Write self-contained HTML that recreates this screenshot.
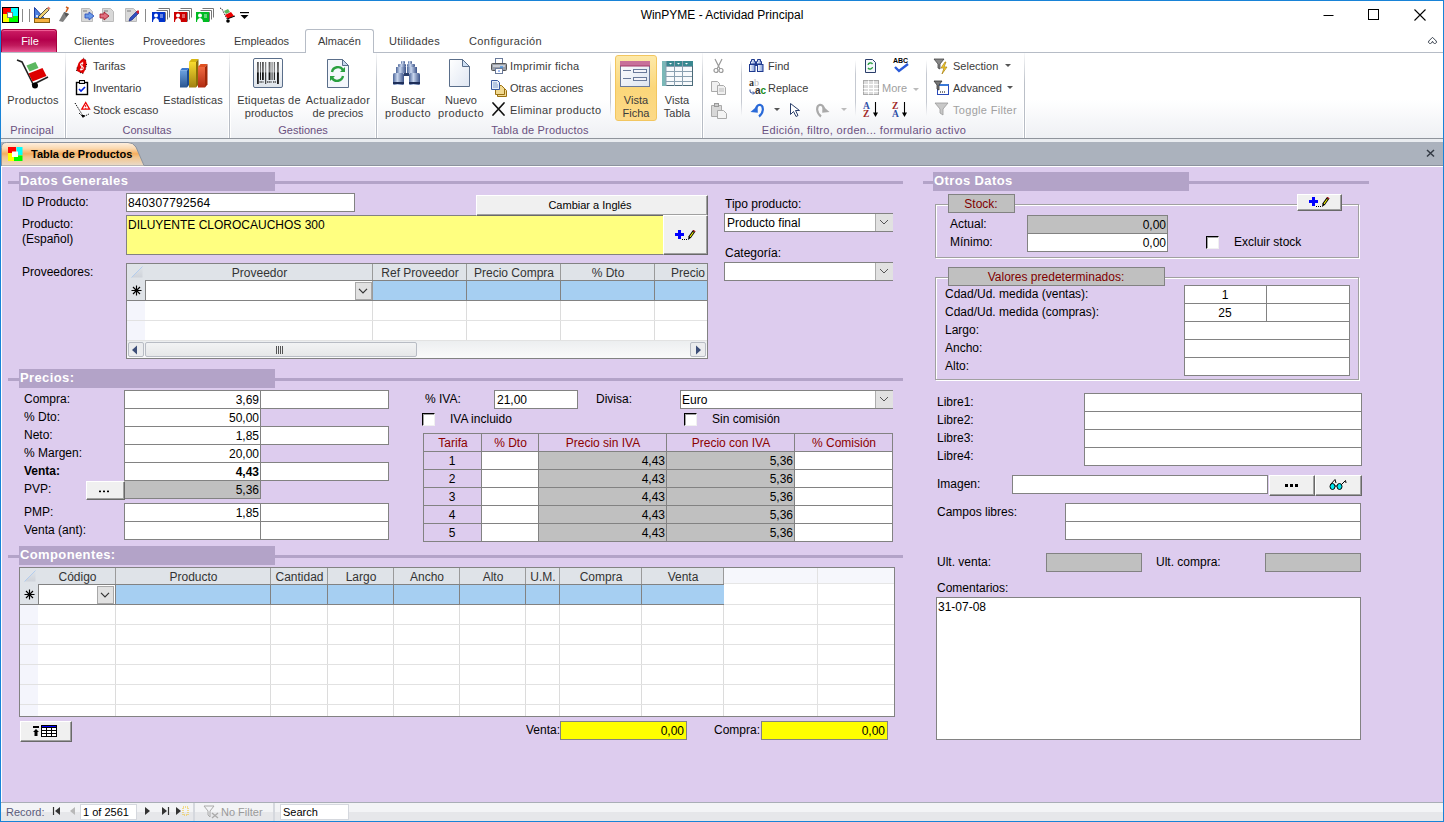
<!DOCTYPE html><html><head><meta charset="utf-8"><style>
*{margin:0;padding:0;box-sizing:border-box}
html,body{width:1444px;height:822px;overflow:hidden;background:#fff;font-family:"Liberation Sans",sans-serif}
div{position:absolute}
.t{white-space:nowrap}
</style></head><body>
<div style="left:0px;top:0px;width:1444px;height:822px;background:#fff"></div>
<div class="t" style="left:522.0px;width:400px;text-align:center;top:9px;font-size:12px;line-height:12px;color:#000;font-weight:normal;">WinPYME - Actividad Principal</div>
<svg style="position:absolute;left:1322px;top:7px" width="16" height="16" viewBox="0 0 16 16"><path d="M1.5 8.5h10" stroke="#000" stroke-width="1"/></svg>
<svg style="position:absolute;left:1366px;top:7px" width="16" height="16" viewBox="0 0 16 16"><rect x="2.5" y="2.5" width="10" height="10" fill="none" stroke="#000"/></svg>
<svg style="position:absolute;left:1412px;top:7px" width="16" height="16" viewBox="0 0 16 16"><path d="M2.5 2.5l11 11M13.5 2.5l-11 11" stroke="#000" stroke-width="1.1"/></svg>
<div style="left:1px;top:29px;width:56px;height:23px;border-radius:3px 3px 0 0;border:1px solid #a8003e;border-bottom:none;background:linear-gradient(#d83a78 0,#c81860 8%,#b4004c 45%,#c01a5c 70%,#e04a88 95%,#f05a96 100%);box-shadow:inset 0 1px 0 rgba(255,120,170,.6)"></div>
<div class="t" style="left:2.0px;width:56px;text-align:center;top:36px;font-size:11px;line-height:11px;color:#fff;font-weight:normal;">File</div>
<div class="t" style="left:74px;top:36px;font-size:11px;line-height:11px;color:#3b3b3b;font-weight:normal;letter-spacing:0.08px;">Clientes</div>
<div class="t" style="left:143px;top:36px;font-size:11px;line-height:11px;color:#3b3b3b;font-weight:normal;letter-spacing:0px;">Proveedores</div>
<div class="t" style="left:234px;top:36px;font-size:11px;line-height:11px;color:#3b3b3b;font-weight:normal;letter-spacing:0px;">Empleados</div>
<div class="t" style="left:389px;top:36px;font-size:11px;line-height:11px;color:#3b3b3b;font-weight:normal;letter-spacing:0.27px;">Utilidades</div>
<div class="t" style="left:469px;top:36px;font-size:11px;line-height:11px;color:#3b3b3b;font-weight:normal;letter-spacing:0.4px;">Configuración</div>
<div style="left:305px;top:29px;width:69px;height:24px;border:1px solid #b6bcc6;border-bottom:none;border-radius:3px 3px 0 0;background:#fff"></div>
<div class="t" style="left:318px;top:36px;font-size:11px;line-height:11px;color:#3b3b3b;font-weight:normal;">Almacén</div>
<svg style="position:absolute;left:1427px;top:36px" width="12" height="9" viewBox="0 0 12 9"><path d="M5.5 1.3L1.8 5Q0.8 6.5 2.3 7.3Q3.5 7.9 4.5 7L5.5 5.3L6.5 7Q7.5 7.9 8.7 7.3Q10.2 6.5 9.2 5Z" fill="none" stroke="#3c4450" stroke-width="1"/></svg>
<div style="left:1px;top:52px;width:1442px;height:87px;border-top:1px solid #b6bcc6;border-bottom:1px solid #8f949c;background:linear-gradient(#fff 0,#fff 55%,#eef0f4 100%)"></div>
<div style="left:306px;top:52px;width:67px;height:1px;background:#fff"></div>
<div style="left:64px;top:53px;width:3px;height:85px;background:linear-gradient(rgba(255,255,255,0),rgba(255,255,255,1) 40%)"></div>
<div style="left:65px;top:53px;width:1px;height:85px;background:linear-gradient(rgba(188,193,201,0.1),#bcc1c9 35%,#b6bbc4)"></div>
<div style="left:228px;top:53px;width:3px;height:85px;background:linear-gradient(rgba(255,255,255,0),rgba(255,255,255,1) 40%)"></div>
<div style="left:229px;top:53px;width:1px;height:85px;background:linear-gradient(rgba(188,193,201,0.1),#bcc1c9 35%,#b6bbc4)"></div>
<div style="left:375px;top:53px;width:3px;height:85px;background:linear-gradient(rgba(255,255,255,0),rgba(255,255,255,1) 40%)"></div>
<div style="left:376px;top:53px;width:1px;height:85px;background:linear-gradient(rgba(188,193,201,0.1),#bcc1c9 35%,#b6bbc4)"></div>
<div style="left:701px;top:53px;width:3px;height:85px;background:linear-gradient(rgba(255,255,255,0),rgba(255,255,255,1) 40%)"></div>
<div style="left:702px;top:53px;width:1px;height:85px;background:linear-gradient(rgba(188,193,201,0.1),#bcc1c9 35%,#b6bbc4)"></div>
<div style="left:1023px;top:53px;width:3px;height:85px;background:linear-gradient(rgba(255,255,255,0),rgba(255,255,255,1) 40%)"></div>
<div style="left:1024px;top:53px;width:1px;height:85px;background:linear-gradient(rgba(188,193,201,0.1),#bcc1c9 35%,#b6bbc4)"></div>
<div class="t" style="left:-3.0px;width:70px;text-align:center;top:125px;font-size:11px;line-height:11px;color:#6a5080;font-weight:normal;letter-spacing:0.16px;">Principal</div>
<div class="t" style="left:97.0px;width:100px;text-align:center;top:125px;font-size:11px;line-height:11px;color:#6a5080;font-weight:normal;">Consultas</div>
<div class="t" style="left:253.0px;width:100px;text-align:center;top:125px;font-size:11px;line-height:11px;color:#6a5080;font-weight:normal;">Gestiones</div>
<div class="t" style="left:440.0px;width:200px;text-align:center;top:125px;font-size:11px;line-height:11px;color:#6a5080;font-weight:normal;letter-spacing:0.18px;">Tabla de Productos</div>
<div class="t" style="left:734.0px;width:260px;text-align:center;top:125px;font-size:11px;line-height:11px;color:#6a5080;font-weight:normal;letter-spacing:0.33px;">Edición, filtro, orden... formulario activo</div>
<div class="t" style="left:-2.0px;width:70px;text-align:center;top:95px;font-size:11px;line-height:11px;color:#3b3b3b;font-weight:normal;letter-spacing:0.2px;">Productos</div>
<div class="t" style="left:93px;top:61px;font-size:11px;line-height:11px;color:#3b3b3b;font-weight:normal;">Tarifas</div>
<div class="t" style="left:93px;top:83px;font-size:11px;line-height:11px;color:#3b3b3b;font-weight:normal;">Inventario</div>
<div class="t" style="left:93px;top:105px;font-size:11px;line-height:11px;color:#3b3b3b;font-weight:normal;">Stock escaso</div>
<div class="t" style="left:153.0px;width:80px;text-align:center;top:95px;font-size:11px;line-height:11px;color:#3b3b3b;font-weight:normal;">Estadísticas</div>
<div class="t" style="left:229.0px;width:80px;text-align:center;top:95px;font-size:11px;line-height:11px;color:#3b3b3b;font-weight:normal;letter-spacing:0.19px;">Etiquetas de</div>
<div class="t" style="left:229.0px;width:80px;text-align:center;top:108px;font-size:11px;line-height:11px;color:#3b3b3b;font-weight:normal;">productos</div>
<div class="t" style="left:298.0px;width:80px;text-align:center;top:95px;font-size:11px;line-height:11px;color:#3b3b3b;font-weight:normal;letter-spacing:0.34px;">Actualizador</div>
<div class="t" style="left:298.0px;width:80px;text-align:center;top:108px;font-size:11px;line-height:11px;color:#3b3b3b;font-weight:normal;">de precios</div>
<div class="t" style="left:378.0px;width:60px;text-align:center;top:95px;font-size:11px;line-height:11px;color:#3b3b3b;font-weight:normal;">Buscar</div>
<div class="t" style="left:378.0px;width:60px;text-align:center;top:108px;font-size:11px;line-height:11px;color:#3b3b3b;font-weight:normal;letter-spacing:0.4px;">producto</div>
<div class="t" style="left:431.0px;width:60px;text-align:center;top:95px;font-size:11px;line-height:11px;color:#3b3b3b;font-weight:normal;">Nuevo</div>
<div class="t" style="left:431.0px;width:60px;text-align:center;top:108px;font-size:11px;line-height:11px;color:#3b3b3b;font-weight:normal;letter-spacing:0.4px;">producto</div>
<div class="t" style="left:510px;top:61px;font-size:11px;line-height:11px;color:#3b3b3b;font-weight:normal;letter-spacing:0.24px;">Imprimir ficha</div>
<div class="t" style="left:510px;top:83px;font-size:11px;line-height:11px;color:#3b3b3b;font-weight:normal;">Otras acciones</div>
<div class="t" style="left:510px;top:105px;font-size:11px;line-height:11px;color:#3b3b3b;font-weight:normal;letter-spacing:0.34px;">Eliminar producto</div>
<div style="left:615px;top:55px;width:42px;height:66px;border:1px solid #f2c660;border-radius:3px;background:linear-gradient(#fde9a8,#fbd77a 50%,#fcd987)"></div>
<div class="t" style="left:606.0px;width:60px;text-align:center;top:95px;font-size:11px;line-height:11px;color:#3b3b3b;font-weight:normal;">Vista</div>
<div class="t" style="left:606.0px;width:60px;text-align:center;top:108px;font-size:11px;line-height:11px;color:#3b3b3b;font-weight:normal;">Ficha</div>
<div class="t" style="left:647.0px;width:60px;text-align:center;top:95px;font-size:11px;line-height:11px;color:#3b3b3b;font-weight:normal;">Vista</div>
<div class="t" style="left:647.0px;width:60px;text-align:center;top:108px;font-size:11px;line-height:11px;color:#3b3b3b;font-weight:normal;">Tabla</div>
<div class="t" style="left:768px;top:61px;font-size:11px;line-height:11px;color:#3b3b3b;font-weight:normal;">Find</div>
<div class="t" style="left:768px;top:83px;font-size:11px;line-height:11px;color:#3b3b3b;font-weight:normal;">Replace</div>
<div class="t" style="left:882px;top:83px;font-size:11px;line-height:11px;color:#a0a0a0;font-weight:normal;">More</div>
<div class="t" style="left:953px;top:61px;font-size:11px;line-height:11px;color:#3b3b3b;font-weight:normal;">Selection</div>
<div class="t" style="left:953px;top:83px;font-size:11px;line-height:11px;color:#3b3b3b;font-weight:normal;">Advanced</div>
<div class="t" style="left:953px;top:105px;font-size:11px;line-height:11px;color:#a0a0a0;font-weight:normal;letter-spacing:0.31px;">Toggle Filter</div>
<div style="left:1px;top:139px;width:1442px;height:3px;background:#e9ecf0"></div>
<div style="left:1px;top:142px;width:1442px;height:24px;background:#abb2bd;border-bottom:1px solid #8c939e"></div>
<svg style="position:absolute;left:1px;top:142px" width="150" height="24" viewBox="0 0 150 24"><defs><linearGradient id="gtab" x1="0" y1="0" x2="0" y2="1"><stop offset="0" stop-color="#fdf0e2"/><stop offset="0.25" stop-color="#fbd9b0"/><stop offset="0.48" stop-color="#f6ae5e"/><stop offset="0.62" stop-color="#f2c48c"/><stop offset="1" stop-color="#e9dccd"/></linearGradient></defs><path d="M0.5 24V5.5Q0.5 0.5 5.5 0.5H127Q132 0.5 135 5L143 23.5L144 24z" fill="url(#gtab)" stroke="#8c939e" stroke-width="1"/></svg>
<svg style="position:absolute;left:8px;top:147px" width="15" height="15" viewBox="0 0 15 15"><rect x="0" y="0" width="8" height="7" fill="#f00"/><rect x="8.5" y="0" width="6" height="8" fill="#0ff"/><rect x="0" y="6" width="6" height="8" fill="#ff0"/><rect x="6" y="8.5" width="8.5" height="5.5" fill="#0f0"/><rect x="4" y="4.5" width="6" height="5.5" fill="#fff"/></svg>
<div class="t" style="left:31px;top:149px;font-size:11px;line-height:11px;color:#000;font-weight:bold;">Tabla de Productos</div>
<svg style="position:absolute;left:1426px;top:149px" width="10" height="9" viewBox="0 0 10 9"><path d="M1 1l7 6.5M8 1L1 7.5" stroke="#333a44" stroke-width="1.5"/></svg>
<div style="left:1px;top:166px;width:1442px;height:636px;background:#ddccee;border-top:1px solid #fff;border-left:1px solid #fff"></div>
<div style="left:8px;top:181px;width:895px;height:3px;background:#b3a3c8"></div>
<div style="left:19px;top:172px;width:256px;height:19px;background:#b3a3c8"></div>
<div class="t" style="left:20px;top:174px;font-size:13px;line-height:13px;color:#fff;font-weight:bold;letter-spacing:0.38px;">Datos Generales</div>
<div style="left:8px;top:378px;width:895px;height:3px;background:#b3a3c8"></div>
<div style="left:19px;top:369px;width:256px;height:19px;background:#b3a3c8"></div>
<div class="t" style="left:20px;top:371px;font-size:13px;line-height:13px;color:#fff;font-weight:bold;letter-spacing:0.38px;">Precios:</div>
<div style="left:8px;top:555px;width:895px;height:3px;background:#b3a3c8"></div>
<div style="left:19px;top:546px;width:256px;height:19px;background:#b3a3c8"></div>
<div class="t" style="left:20px;top:548px;font-size:13px;line-height:13px;color:#fff;font-weight:bold;letter-spacing:0.38px;">Componentes:</div>
<div style="left:923px;top:181px;width:446px;height:3px;background:#b3a3c8"></div>
<div style="left:933px;top:172px;width:256px;height:19px;background:#b3a3c8"></div>
<div class="t" style="left:934px;top:174px;font-size:13px;line-height:13px;color:#fff;font-weight:bold;letter-spacing:0.38px;">Otros Datos</div>
<div class="t" style="left:22px;top:196px;font-size:12px;line-height:12px;color:#000;font-weight:normal;">ID Producto:</div>
<div style="left:126px;top:193px;width:229px;height:19px;background:#fff;border:1px solid #828282;"></div>
<div class="t" style="left:128px;top:197px;font-size:12px;line-height:12px;color:#000;font-weight:normal;letter-spacing:0.2px;">840307792564</div>
<div class="t" style="left:22px;top:218px;font-size:12px;line-height:12px;color:#000;font-weight:normal;">Producto:</div>
<div class="t" style="left:22px;top:233px;font-size:12px;line-height:12px;color:#000;font-weight:normal;">(Español)</div>
<div style="left:126px;top:215px;width:582px;height:40px;background:#ffff80;border:1px solid #828282;"></div>
<div class="t" style="left:128px;top:219px;font-size:12px;line-height:12px;color:#000;font-weight:normal;">DILUYENTE CLOROCAUCHOS 300</div>
<div style="left:476px;top:195px;width:232px;height:21px;background:#f0f0f0;border-top:1px solid #fff;border-left:1px solid #fff;border-right:1px solid #696969;border-bottom:1px solid #696969;box-shadow:inset -1px -1px 0 #a0a0a0"></div>
<div style="left:663px;top:215px;width:45px;height:40px;background:#f0f0f0;border-top:1px solid #fff;border-left:1px solid #fff;border-right:1px solid #696969;border-bottom:1px solid #696969;box-shadow:inset -1px -1px 0 #a0a0a0"></div>
<svg style="position:absolute;left:675px;top:230px" width="22" height="11" viewBox="0 0 22 11"><g shape-rendering="crispEdges"><rect x="0" y="3" width="9" height="3" fill="#0000ff"/><rect x="3" y="0" width="3" height="9" fill="#0000ff"/><rect x="7" y="9" width="1" height="1" fill="#000"/><rect x="9" y="9" width="1" height="1" fill="#000"/><rect x="11" y="9" width="1" height="1" fill="#000"/></g><path d="M13 10L13.6 6.2L17.6 0.6L20 2.2L16 7.8z" fill="#000"/><path d="M14.6 6.6L17.9 2L18.7 2.6L15.4 7.2z" fill="#ffff00"/><path d="M17.6 0.6L18.3 -0.2L20.6 1.3L20 2.2z" fill="#900"/></svg>
<div class="t" style="left:490.0px;width:200px;text-align:center;top:200px;font-size:11px;line-height:11px;color:#000;font-weight:normal;">Cambiar a Inglés</div>
<div class="t" style="left:22px;top:266px;font-size:12px;line-height:12px;color:#000;font-weight:normal;">Proveedores:</div>
<div style="left:126px;top:263px;width:582px;height:96px;background:#fff;border:1px solid #828282"></div>
<div style="left:127px;top:264px;width:580px;height:16px;background:#dfe3e8"></div>
<div style="left:127px;top:300px;width:18px;height:41px;background:#f4f5fc"></div>
<div style="left:127px;top:280px;width:18px;height:20px;background:#dfe3e8"></div>
<svg style="position:absolute;left:131px;top:266px" width="12" height="12" viewBox="0 0 12 12"><defs><linearGradient id="gsc" x1="0" y1="0" x2="0" y2="1"><stop offset="0" stop-color="#dfe3e8"/><stop offset="1" stop-color="#cfd3da"/></linearGradient></defs><path d="M0.5 11.5L11.5 0.5V11.5z" fill="url(#gsc)"/><path d="M0.5 11.5L11.5 0.5" stroke="#a8c8f0" stroke-width="0.8"/></svg>
<div style="left:372px;top:300px;width:1px;height:41px;background:#dcdcdc"></div>
<div style="left:372px;top:264px;width:1px;height:36px;background:#9a9a9a"></div>
<div class="t" style="left:199.5px;width:120px;text-align:center;top:267px;font-size:12px;line-height:12px;color:#333;font-weight:normal;">Proveedor</div>
<div style="left:466px;top:300px;width:1px;height:41px;background:#dcdcdc"></div>
<div style="left:466px;top:264px;width:1px;height:36px;background:#9a9a9a"></div>
<div class="t" style="left:360.0px;width:120px;text-align:center;top:267px;font-size:12px;line-height:12px;color:#333;font-weight:normal;">Ref Proveedor</div>
<div style="left:560px;top:300px;width:1px;height:41px;background:#dcdcdc"></div>
<div style="left:560px;top:264px;width:1px;height:36px;background:#9a9a9a"></div>
<div class="t" style="left:454.0px;width:120px;text-align:center;top:267px;font-size:12px;line-height:12px;color:#333;font-weight:normal;">Precio Compra</div>
<div style="left:654px;top:300px;width:1px;height:41px;background:#dcdcdc"></div>
<div style="left:654px;top:264px;width:1px;height:36px;background:#9a9a9a"></div>
<div class="t" style="left:548.0px;width:120px;text-align:center;top:267px;font-size:12px;line-height:12px;color:#333;font-weight:normal;">% Dto</div>
<div class="t" style="left:625px;width:80px;text-align:right;top:267px;font-size:12px;line-height:12px;color:#333;font-weight:normal;">Precio</div>
<div style="left:145px;top:280px;width:562px;height:1px;background:#828282"></div>
<div style="left:373px;top:281px;width:334px;height:19px;background:#a6cff2"></div>
<div style="left:466px;top:281px;width:1px;height:19px;background:#828282"></div>
<div style="left:560px;top:281px;width:1px;height:19px;background:#828282"></div>
<div style="left:654px;top:281px;width:1px;height:19px;background:#828282"></div>
<div style="left:145px;top:281px;width:1px;height:19px;background:#828282"></div>
<div style="left:355px;top:282px;width:17px;height:18px;background:#e1e1e1;border:1px solid #a8a8a8"></div>
<svg style="position:absolute;left:358px;top:288px" width="10" height="6" viewBox="0 0 10 6"><path d="M1 0.8l4 4 4-4" fill="none" stroke="#333" stroke-width="1.2"/></svg>
<div style="left:127px;top:300px;width:580px;height:1px;background:#828282"></div>
<div style="left:127px;top:320px;width:580px;height:1px;background:#e2e2e2"></div>
<div style="left:127px;top:340px;width:580px;height:1px;background:#e2e2e2"></div>
<svg style="position:absolute;left:131px;top:285px" width="11" height="11" viewBox="0 0 11 11"><path d="M5.5 0.5v10M0.5 5.5h10M2 2l7 7M9 2l-7 7" stroke="#000" stroke-width="1.15"/></svg>
<div style="left:127px;top:341px;width:580px;height:17px;background:linear-gradient(#eceef0,#fafafa)"></div>
<div style="left:128px;top:342px;width:16px;height:15px;background:#ebecee;border:1px solid #b8bcc4;border-radius:2px"></div>
<div style="left:145px;top:342px;width:272px;height:15px;background:linear-gradient(#f2f3f4,#e6e7e8);border:1px solid #b8bcc4;border-radius:2px"></div>
<div style="left:690px;top:342px;width:16px;height:15px;background:#ebecee;border:1px solid #b8bcc4;border-radius:2px"></div>
<svg style="position:absolute;left:131px;top:345px" width="8" height="10" viewBox="0 0 8 10"><path d="M6 0.5L1 5l5 4.5z" fill="#3d4e78"/></svg>
<svg style="position:absolute;left:695px;top:345px" width="8" height="10" viewBox="0 0 8 10"><path d="M1 0.5L6 5l-5 4.5z" fill="#3d4e78"/></svg>
<svg style="position:absolute;left:276px;top:346px" width="8" height="8" viewBox="0 0 8 8"><path d="M0.5 0v8M2.5 0v8M4.5 0v8M6.5 0v8" stroke="#555" stroke-width="1"/></svg>
<div class="t" style="left:725px;top:198px;font-size:12px;line-height:12px;color:#000;font-weight:normal;">Tipo producto:</div>
<div style="left:724px;top:213px;width:169px;height:19px;background:#fff;border:1px solid #828282;"></div>
<div class="t" style="left:727px;top:217px;font-size:12px;line-height:12px;color:#000;font-weight:normal;">Producto final</div>
<div style="left:875px;top:214px;width:18px;height:17px;background:#e1e1e1;border-left:1px solid #adadad"></div>
<svg style="position:absolute;left:879px;top:219px" width="10" height="6" viewBox="0 0 10 6"><path d="M1 1l4 4 4-4" fill="none" stroke="#555" stroke-width="1"/></svg>
<div class="t" style="left:725px;top:247px;font-size:12px;line-height:12px;color:#000;font-weight:normal;">Categoría:</div>
<div style="left:724px;top:262px;width:169px;height:19px;background:#fff;border:1px solid #828282;"></div>
<div style="left:875px;top:263px;width:18px;height:17px;background:#e1e1e1;border-left:1px solid #adadad"></div>
<svg style="position:absolute;left:879px;top:268px" width="10" height="6" viewBox="0 0 10 6"><path d="M1 1l4 4 4-4" fill="none" stroke="#555" stroke-width="1"/></svg>
<div style="left:935px;top:204px;width:424px;height:54px;border:1px solid #a0a0a0;box-shadow:1px 1px 0 #fff, inset 1px 1px 0 #fff"></div>
<div style="left:948px;top:194px;width:67px;height:19px;background:#c0c0c0;border:1px solid #828282"></div>
<div class="t" style="left:947.5px;width:67px;text-align:center;top:198px;font-size:12px;line-height:12px;color:#800000;font-weight:normal;">Stock:</div>
<div style="left:1297px;top:194px;width:45px;height:17px;background:#f0f0f0;border-top:1px solid #fff;border-left:1px solid #fff;border-right:1px solid #696969;border-bottom:1px solid #696969;box-shadow:inset -1px -1px 0 #a0a0a0"></div>
<svg style="position:absolute;left:1309px;top:197px" width="22" height="11" viewBox="0 0 22 11"><g shape-rendering="crispEdges"><rect x="0" y="3" width="9" height="3" fill="#0000ff"/><rect x="3" y="0" width="3" height="9" fill="#0000ff"/><rect x="7" y="9" width="1" height="1" fill="#000"/><rect x="9" y="9" width="1" height="1" fill="#000"/><rect x="11" y="9" width="1" height="1" fill="#000"/></g><path d="M13 10L13.6 6.2L17.6 0.6L20 2.2L16 7.8z" fill="#000"/><path d="M14.6 6.6L17.9 2L18.7 2.6L15.4 7.2z" fill="#ffff00"/><path d="M17.6 0.6L18.3 -0.2L20.6 1.3L20 2.2z" fill="#900"/></svg>
<div class="t" style="left:950px;top:218px;font-size:12px;line-height:12px;color:#000;font-weight:normal;">Actual:</div>
<div style="left:1027px;top:215px;width:141px;height:19px;background:#c0c0c0;border:1px solid #828282;"></div>
<div class="t" style="left:1066px;width:100px;text-align:right;top:219px;font-size:12px;line-height:12px;color:#000;font-weight:normal;">0,00</div>
<div class="t" style="left:950px;top:236px;font-size:12px;line-height:12px;color:#000;font-weight:normal;">Mínimo:</div>
<div style="left:1027px;top:233px;width:141px;height:19px;background:#fff;border:1px solid #828282;"></div>
<div class="t" style="left:1066px;width:100px;text-align:right;top:237px;font-size:12px;line-height:12px;color:#000;font-weight:normal;">0,00</div>
<div style="left:1206px;top:236px;width:13px;height:13px;background:#fff;border-top:1px solid #000;border-left:1px solid #000;border-right:1px solid #f0f0f0;border-bottom:1px solid #f0f0f0;box-shadow:inset 1px 1px 0 #a0a0a0"></div>
<div class="t" style="left:1234px;top:236px;font-size:12px;line-height:12px;color:#000;font-weight:normal;">Excluir stock</div>
<div style="left:935px;top:277px;width:424px;height:103px;border:1px solid #a0a0a0;box-shadow:1px 1px 0 #fff, inset 1px 1px 0 #fff"></div>
<div style="left:948px;top:267px;width:217px;height:19px;background:#c0c0c0;border:1px solid #828282"></div>
<div class="t" style="left:947.5px;width:217px;text-align:center;top:271px;font-size:12px;line-height:12px;color:#800000;font-weight:normal;">Valores predeterminados:</div>
<div class="t" style="left:945px;top:288px;font-size:12px;line-height:12px;color:#000;font-weight:normal;">Cdad/Ud. medida (ventas):</div>
<div style="left:1184px;top:285px;width:166px;height:19px;background:#fff;border:1px solid #828282;"></div>
<div class="t" style="left:945px;top:306px;font-size:12px;line-height:12px;color:#000;font-weight:normal;">Cdad/Ud. medida (compras):</div>
<div style="left:1184px;top:303px;width:166px;height:19px;background:#fff;border:1px solid #828282;"></div>
<div class="t" style="left:945px;top:324px;font-size:12px;line-height:12px;color:#000;font-weight:normal;">Largo:</div>
<div style="left:1184px;top:321px;width:166px;height:19px;background:#fff;border:1px solid #828282;"></div>
<div class="t" style="left:945px;top:342px;font-size:12px;line-height:12px;color:#000;font-weight:normal;">Ancho:</div>
<div style="left:1184px;top:339px;width:166px;height:19px;background:#fff;border:1px solid #828282;"></div>
<div class="t" style="left:945px;top:360px;font-size:12px;line-height:12px;color:#000;font-weight:normal;">Alto:</div>
<div style="left:1184px;top:357px;width:166px;height:19px;background:#fff;border:1px solid #828282;"></div>
<div style="left:1266px;top:286px;width:1px;height:18px;background:#828282"></div>
<div class="t" style="left:1185.0px;width:80px;text-align:center;top:289px;font-size:12px;line-height:12px;color:#000;font-weight:normal;">1</div>
<div style="left:1266px;top:304px;width:1px;height:18px;background:#828282"></div>
<div class="t" style="left:1185.0px;width:80px;text-align:center;top:307px;font-size:12px;line-height:12px;color:#000;font-weight:normal;">25</div>
<div class="t" style="left:937px;top:396px;font-size:12px;line-height:12px;color:#000;font-weight:normal;">Libre1:</div>
<div style="left:1084px;top:393px;width:278px;height:19px;background:#fff;border:1px solid #828282;"></div>
<div class="t" style="left:937px;top:414px;font-size:12px;line-height:12px;color:#000;font-weight:normal;">Libre2:</div>
<div style="left:1084px;top:411px;width:278px;height:19px;background:#fff;border:1px solid #828282;"></div>
<div class="t" style="left:937px;top:432px;font-size:12px;line-height:12px;color:#000;font-weight:normal;">Libre3:</div>
<div style="left:1084px;top:429px;width:278px;height:19px;background:#fff;border:1px solid #828282;"></div>
<div class="t" style="left:937px;top:450px;font-size:12px;line-height:12px;color:#000;font-weight:normal;">Libre4:</div>
<div style="left:1084px;top:447px;width:278px;height:19px;background:#fff;border:1px solid #828282;"></div>
<div class="t" style="left:937px;top:478px;font-size:12px;line-height:12px;color:#000;font-weight:normal;">Imagen:</div>
<div style="left:1012px;top:475px;width:256px;height:19px;background:#fff;border:1px solid #828282;"></div>
<div style="left:1269px;top:475px;width:46px;height:21px;background:#f0f0f0;border-top:1px solid #fff;border-left:1px solid #fff;border-right:1px solid #696969;border-bottom:1px solid #696969;box-shadow:inset -1px -1px 0 #a0a0a0"></div>
<svg style="position:absolute;left:1285px;top:484px" width="14" height="4" viewBox="0 0 14 4"><rect x="0" y="0" width="3" height="3" fill="#000"/><rect x="5" y="0" width="3" height="3" fill="#000"/><rect x="10" y="0" width="3" height="3" fill="#000"/></svg>
<div style="left:1315px;top:475px;width:47px;height:21px;background:#f0f0f0;border-top:1px solid #fff;border-left:1px solid #fff;border-right:1px solid #696969;border-bottom:1px solid #696969;box-shadow:inset -1px -1px 0 #a0a0a0"></div>
<svg style="position:absolute;left:1329px;top:478px" width="18" height="13" viewBox="0 0 18 13"><ellipse cx="3.5" cy="8.5" rx="2.5" ry="3" fill="#00e8f0" stroke="#000" stroke-width="1"/><ellipse cx="10.5" cy="8.5" rx="2.5" ry="3" fill="#00e8f0" stroke="#000" stroke-width="1"/><path d="M6 8h2M1.5 6.5L6 1.5 7 5M12.5 6.5L16.5 2.5 17 5" fill="none" stroke="#000" stroke-width="1"/></svg>
<div class="t" style="left:937px;top:506px;font-size:12px;line-height:12px;color:#000;font-weight:normal;">Campos libres:</div>
<div style="left:1065px;top:503px;width:296px;height:19px;background:#fff;border:1px solid #828282;"></div>
<div style="left:1065px;top:521px;width:296px;height:19px;background:#fff;border:1px solid #828282;"></div>
<div class="t" style="left:937px;top:556px;font-size:12px;line-height:12px;color:#000;font-weight:normal;">Ult. venta:</div>
<div style="left:1046px;top:553px;width:96px;height:19px;background:#c0c0c0;border:1px solid #828282;"></div>
<div class="t" style="left:1156px;top:556px;font-size:12px;line-height:12px;color:#000;font-weight:normal;">Ult. compra:</div>
<div style="left:1265px;top:553px;width:96px;height:19px;background:#c0c0c0;border:1px solid #828282;"></div>
<div class="t" style="left:937px;top:582px;font-size:12px;line-height:12px;color:#000;font-weight:normal;">Comentarios:</div>
<div style="left:936px;top:597px;width:425px;height:143px;background:#fff;border:1px solid #828282;"></div>
<div class="t" style="left:938px;top:601px;font-size:12px;line-height:12px;color:#000;font-weight:normal;">31-07-08</div>
<div class="t" style="left:24px;top:393px;font-size:12px;line-height:12px;color:#000;font-weight:normal;">Compra:</div>
<div class="t" style="left:24px;top:411px;font-size:12px;line-height:12px;color:#000;font-weight:normal;">% Dto:</div>
<div class="t" style="left:24px;top:429px;font-size:12px;line-height:12px;color:#000;font-weight:normal;">Neto:</div>
<div class="t" style="left:24px;top:447px;font-size:12px;line-height:12px;color:#000;font-weight:normal;">% Margen:</div>
<div class="t" style="left:24px;top:465px;font-size:12px;line-height:12px;color:#000;font-weight:bold;">Venta:</div>
<div class="t" style="left:24px;top:483px;font-size:12px;line-height:12px;color:#000;font-weight:normal;">PVP:</div>
<div class="t" style="left:24px;top:506px;font-size:12px;line-height:12px;color:#000;font-weight:normal;">PMP:</div>
<div class="t" style="left:24px;top:524px;font-size:12px;line-height:12px;color:#000;font-weight:normal;">Venta (ant):</div>
<div style="left:124px;top:390px;width:137px;height:19px;background:#fff;border:1px solid #828282;"></div>
<div style="left:260px;top:390px;width:129px;height:19px;background:#fff;border:1px solid #828282;"></div>
<div class="t" style="left:159px;width:100px;text-align:right;top:394px;font-size:12px;line-height:12px;color:#000;font-weight:normal;">3,69</div>
<div style="left:124px;top:408px;width:137px;height:19px;background:#fff;border:1px solid #828282;"></div>
<div class="t" style="left:159px;width:100px;text-align:right;top:412px;font-size:12px;line-height:12px;color:#000;font-weight:normal;">50,00</div>
<div style="left:124px;top:426px;width:137px;height:19px;background:#fff;border:1px solid #828282;"></div>
<div style="left:260px;top:426px;width:129px;height:19px;background:#fff;border:1px solid #828282;"></div>
<div class="t" style="left:159px;width:100px;text-align:right;top:430px;font-size:12px;line-height:12px;color:#000;font-weight:normal;">1,85</div>
<div style="left:124px;top:444px;width:137px;height:19px;background:#fff;border:1px solid #828282;"></div>
<div class="t" style="left:159px;width:100px;text-align:right;top:448px;font-size:12px;line-height:12px;color:#000;font-weight:normal;">20,00</div>
<div style="left:124px;top:462px;width:137px;height:19px;background:#fff;border:1px solid #828282;"></div>
<div style="left:260px;top:462px;width:129px;height:19px;background:#fff;border:1px solid #828282;"></div>
<div class="t" style="left:159px;width:100px;text-align:right;top:466px;font-size:12px;line-height:12px;color:#000;font-weight:bold;">4,43</div>
<div style="left:124px;top:480px;width:137px;height:19px;background:#c0c0c0;border:1px solid #828282;"></div>
<div class="t" style="left:159px;width:100px;text-align:right;top:484px;font-size:12px;line-height:12px;color:#000;font-weight:normal;">5,36</div>
<div style="left:124px;top:503px;width:137px;height:19px;background:#fff;border:1px solid #828282;"></div>
<div style="left:260px;top:503px;width:129px;height:19px;background:#fff;border:1px solid #828282;"></div>
<div class="t" style="left:159px;width:100px;text-align:right;top:507px;font-size:12px;line-height:12px;color:#000;font-weight:normal;">1,85</div>
<div style="left:124px;top:521px;width:137px;height:19px;background:#fff;border:1px solid #828282;"></div>
<div style="left:260px;top:521px;width:129px;height:19px;background:#fff;border:1px solid #828282;"></div>
<div style="left:86px;top:481px;width:39px;height:19px;background:#f0f0f0;border-top:1px solid #fff;border-left:1px solid #fff;border-right:1px solid #696969;border-bottom:1px solid #696969;box-shadow:inset -1px -1px 0 #a0a0a0"></div>
<svg style="position:absolute;left:99px;top:490px" width="11" height="3" viewBox="0 0 11 3"><rect x="0" y="0.6" width="2" height="1.6" fill="#000"/><rect x="4" y="0.6" width="2" height="1.6" fill="#000"/><rect x="8" y="0.6" width="2" height="1.6" fill="#000"/></svg>
<div class="t" style="left:425px;top:393px;font-size:12px;line-height:12px;color:#000;font-weight:normal;">% IVA:</div>
<div style="left:494px;top:390px;width:84px;height:19px;background:#fff;border:1px solid #828282;"></div>
<div class="t" style="left:497px;top:394px;font-size:12px;line-height:12px;color:#000;font-weight:normal;">21,00</div>
<div class="t" style="left:596px;top:393px;font-size:12px;line-height:12px;color:#000;font-weight:normal;">Divisa:</div>
<div style="left:680px;top:390px;width:213px;height:19px;background:#fff;border:1px solid #828282;"></div>
<div class="t" style="left:682px;top:394px;font-size:12px;line-height:12px;color:#000;font-weight:normal;">Euro</div>
<div style="left:875px;top:391px;width:18px;height:17px;background:#e1e1e1;border-left:1px solid #adadad"></div>
<svg style="position:absolute;left:879px;top:396px" width="10" height="6" viewBox="0 0 10 6"><path d="M1 1l4 4 4-4" fill="none" stroke="#555" stroke-width="1"/></svg>
<div style="left:422px;top:413px;width:13px;height:13px;background:#fff;border-top:1px solid #000;border-left:1px solid #000;border-right:1px solid #f0f0f0;border-bottom:1px solid #f0f0f0;box-shadow:inset 1px 1px 0 #a0a0a0"></div>
<div class="t" style="left:450px;top:413px;font-size:12px;line-height:12px;color:#000;font-weight:normal;">IVA incluido</div>
<div style="left:684px;top:413px;width:13px;height:13px;background:#fff;border-top:1px solid #000;border-left:1px solid #000;border-right:1px solid #f0f0f0;border-bottom:1px solid #f0f0f0;box-shadow:inset 1px 1px 0 #a0a0a0"></div>
<div class="t" style="left:712px;top:413px;font-size:12px;line-height:12px;color:#000;font-weight:normal;">Sin comisión</div>
<div style="left:423px;top:433px;width:470px;height:109px;border:1px solid #828282;background:#ddccee"></div>
<div class="t" style="left:383.0px;width:140px;text-align:center;top:437px;font-size:12px;line-height:12px;color:#8b0000;font-weight:normal;">Tarifa</div>
<div class="t" style="left:440.5px;width:140px;text-align:center;top:437px;font-size:12px;line-height:12px;color:#8b0000;font-weight:normal;">% Dto</div>
<div class="t" style="left:533.0px;width:140px;text-align:center;top:437px;font-size:12px;line-height:12px;color:#8b0000;font-weight:normal;">Precio sin IVA</div>
<div class="t" style="left:661.0px;width:140px;text-align:center;top:437px;font-size:12px;line-height:12px;color:#8b0000;font-weight:normal;">Precio con IVA</div>
<div class="t" style="left:774.0px;width:140px;text-align:center;top:437px;font-size:12px;line-height:12px;color:#8b0000;font-weight:normal;">% Comisión</div>
<div style="left:424px;top:451px;width:468px;height:1px;background:#828282"></div>
<div style="left:482px;top:452px;width:56px;height:17px;background:#fff"></div>
<div style="left:539px;top:452px;width:255px;height:17px;background:#c0c0c0"></div>
<div style="left:795px;top:452px;width:97px;height:17px;background:#fff"></div>
<div class="t" style="left:432.0px;width:40px;text-align:center;top:455px;font-size:12px;line-height:12px;color:#000;font-weight:normal;">1</div>
<div class="t" style="left:565px;width:100px;text-align:right;top:455px;font-size:12px;line-height:12px;color:#000;font-weight:normal;">4,43</div>
<div class="t" style="left:693px;width:100px;text-align:right;top:455px;font-size:12px;line-height:12px;color:#000;font-weight:normal;">5,36</div>
<div style="left:424px;top:469px;width:468px;height:1px;background:#828282"></div>
<div style="left:482px;top:470px;width:56px;height:17px;background:#fff"></div>
<div style="left:539px;top:470px;width:255px;height:17px;background:#c0c0c0"></div>
<div style="left:795px;top:470px;width:97px;height:17px;background:#fff"></div>
<div class="t" style="left:432.0px;width:40px;text-align:center;top:473px;font-size:12px;line-height:12px;color:#000;font-weight:normal;">2</div>
<div class="t" style="left:565px;width:100px;text-align:right;top:473px;font-size:12px;line-height:12px;color:#000;font-weight:normal;">4,43</div>
<div class="t" style="left:693px;width:100px;text-align:right;top:473px;font-size:12px;line-height:12px;color:#000;font-weight:normal;">5,36</div>
<div style="left:424px;top:487px;width:468px;height:1px;background:#828282"></div>
<div style="left:482px;top:488px;width:56px;height:17px;background:#fff"></div>
<div style="left:539px;top:488px;width:255px;height:17px;background:#c0c0c0"></div>
<div style="left:795px;top:488px;width:97px;height:17px;background:#fff"></div>
<div class="t" style="left:432.0px;width:40px;text-align:center;top:491px;font-size:12px;line-height:12px;color:#000;font-weight:normal;">3</div>
<div class="t" style="left:565px;width:100px;text-align:right;top:491px;font-size:12px;line-height:12px;color:#000;font-weight:normal;">4,43</div>
<div class="t" style="left:693px;width:100px;text-align:right;top:491px;font-size:12px;line-height:12px;color:#000;font-weight:normal;">5,36</div>
<div style="left:424px;top:505px;width:468px;height:1px;background:#828282"></div>
<div style="left:482px;top:506px;width:56px;height:17px;background:#fff"></div>
<div style="left:539px;top:506px;width:255px;height:17px;background:#c0c0c0"></div>
<div style="left:795px;top:506px;width:97px;height:17px;background:#fff"></div>
<div class="t" style="left:432.0px;width:40px;text-align:center;top:509px;font-size:12px;line-height:12px;color:#000;font-weight:normal;">4</div>
<div class="t" style="left:565px;width:100px;text-align:right;top:509px;font-size:12px;line-height:12px;color:#000;font-weight:normal;">4,43</div>
<div class="t" style="left:693px;width:100px;text-align:right;top:509px;font-size:12px;line-height:12px;color:#000;font-weight:normal;">5,36</div>
<div style="left:424px;top:523px;width:468px;height:1px;background:#828282"></div>
<div style="left:482px;top:524px;width:56px;height:17px;background:#fff"></div>
<div style="left:539px;top:524px;width:255px;height:17px;background:#c0c0c0"></div>
<div style="left:795px;top:524px;width:97px;height:17px;background:#fff"></div>
<div class="t" style="left:432.0px;width:40px;text-align:center;top:527px;font-size:12px;line-height:12px;color:#000;font-weight:normal;">5</div>
<div class="t" style="left:565px;width:100px;text-align:right;top:527px;font-size:12px;line-height:12px;color:#000;font-weight:normal;">4,43</div>
<div class="t" style="left:693px;width:100px;text-align:right;top:527px;font-size:12px;line-height:12px;color:#000;font-weight:normal;">5,36</div>
<div style="left:481px;top:434px;width:1px;height:107px;background:#828282"></div>
<div style="left:538px;top:434px;width:1px;height:107px;background:#828282"></div>
<div style="left:666px;top:434px;width:1px;height:107px;background:#828282"></div>
<div style="left:794px;top:434px;width:1px;height:107px;background:#828282"></div>
<div style="left:19px;top:567px;width:876px;height:150px;background:#fff;border:1px solid #828282"></div>
<div style="left:20px;top:568px;width:703px;height:16px;background:#dfe3e8"></div>
<div style="left:724px;top:568px;width:170px;height:16px;background:#f6f7fc;border-bottom:1px solid #e6e6e6"></div>
<div style="left:20px;top:604px;width:18px;height:112px;background:#f4f5fc"></div>
<div style="left:20px;top:584px;width:18px;height:20px;background:#dfe3e8"></div>
<svg style="position:absolute;left:24px;top:570px" width="12" height="12" viewBox="0 0 12 12"><defs><linearGradient id="gsc" x1="0" y1="0" x2="0" y2="1"><stop offset="0" stop-color="#dfe3e8"/><stop offset="1" stop-color="#cfd3da"/></linearGradient></defs><path d="M0.5 11.5L11.5 0.5V11.5z" fill="url(#gsc)"/><path d="M0.5 11.5L11.5 0.5" stroke="#a8c8f0" stroke-width="0.8"/></svg>
<div style="left:115px;top:604px;width:1px;height:112px;background:#dcdcdc"></div>
<div style="left:115px;top:568px;width:1px;height:36px;background:#9a9a9a"></div>
<div class="t" style="left:17.5px;width:120px;text-align:center;top:571px;font-size:12px;line-height:12px;color:#333;font-weight:normal;">Código</div>
<div style="left:270px;top:604px;width:1px;height:112px;background:#dcdcdc"></div>
<div style="left:270px;top:568px;width:1px;height:36px;background:#9a9a9a"></div>
<div class="t" style="left:133.5px;width:120px;text-align:center;top:571px;font-size:12px;line-height:12px;color:#333;font-weight:normal;">Producto</div>
<div style="left:327px;top:604px;width:1px;height:112px;background:#dcdcdc"></div>
<div style="left:327px;top:568px;width:1px;height:36px;background:#9a9a9a"></div>
<div class="t" style="left:239.5px;width:120px;text-align:center;top:571px;font-size:12px;line-height:12px;color:#333;font-weight:normal;">Cantidad</div>
<div style="left:393px;top:604px;width:1px;height:112px;background:#dcdcdc"></div>
<div style="left:393px;top:568px;width:1px;height:36px;background:#9a9a9a"></div>
<div class="t" style="left:301.0px;width:120px;text-align:center;top:571px;font-size:12px;line-height:12px;color:#333;font-weight:normal;">Largo</div>
<div style="left:459px;top:604px;width:1px;height:112px;background:#dcdcdc"></div>
<div style="left:459px;top:568px;width:1px;height:36px;background:#9a9a9a"></div>
<div class="t" style="left:367.0px;width:120px;text-align:center;top:571px;font-size:12px;line-height:12px;color:#333;font-weight:normal;">Ancho</div>
<div style="left:525px;top:604px;width:1px;height:112px;background:#dcdcdc"></div>
<div style="left:525px;top:568px;width:1px;height:36px;background:#9a9a9a"></div>
<div class="t" style="left:433.0px;width:120px;text-align:center;top:571px;font-size:12px;line-height:12px;color:#333;font-weight:normal;">Alto</div>
<div style="left:559px;top:604px;width:1px;height:112px;background:#dcdcdc"></div>
<div style="left:559px;top:568px;width:1px;height:36px;background:#9a9a9a"></div>
<div class="t" style="left:483.0px;width:120px;text-align:center;top:571px;font-size:12px;line-height:12px;color:#333;font-weight:normal;">U.M.</div>
<div style="left:641px;top:604px;width:1px;height:112px;background:#dcdcdc"></div>
<div style="left:641px;top:568px;width:1px;height:36px;background:#9a9a9a"></div>
<div class="t" style="left:541.0px;width:120px;text-align:center;top:571px;font-size:12px;line-height:12px;color:#333;font-weight:normal;">Compra</div>
<div style="left:723px;top:604px;width:1px;height:112px;background:#dcdcdc"></div>
<div style="left:723px;top:568px;width:1px;height:36px;background:#9a9a9a"></div>
<div class="t" style="left:623.0px;width:120px;text-align:center;top:571px;font-size:12px;line-height:12px;color:#333;font-weight:normal;">Venta</div>
<div style="left:817px;top:568px;width:1px;height:148px;background:#e2e2e2"></div>
<div style="left:38px;top:584px;width:686px;height:1px;background:#828282"></div>
<div style="left:116px;top:585px;width:608px;height:19px;background:#a6cff2"></div>
<div style="left:270px;top:585px;width:1px;height:19px;background:#828282"></div>
<div style="left:327px;top:585px;width:1px;height:19px;background:#828282"></div>
<div style="left:393px;top:585px;width:1px;height:19px;background:#828282"></div>
<div style="left:459px;top:585px;width:1px;height:19px;background:#828282"></div>
<div style="left:525px;top:585px;width:1px;height:19px;background:#828282"></div>
<div style="left:559px;top:585px;width:1px;height:19px;background:#828282"></div>
<div style="left:641px;top:585px;width:1px;height:19px;background:#828282"></div>
<div style="left:38px;top:585px;width:1px;height:19px;background:#828282"></div>
<div style="left:39px;top:585px;width:76px;height:19px;background:#fff"></div>
<div style="left:115px;top:585px;width:1px;height:19px;background:#828282"></div>
<div style="left:97px;top:586px;width:17px;height:18px;background:#e1e1e1;border:1px solid #a8a8a8"></div>
<svg style="position:absolute;left:100px;top:592px" width="10" height="6" viewBox="0 0 10 6"><path d="M1 0.8l4 4 4-4" fill="none" stroke="#333" stroke-width="1.2"/></svg>
<div style="left:20px;top:604px;width:704px;height:1px;background:#828282"></div>
<div style="left:724px;top:604px;width:170px;height:1px;background:#e2e2e2"></div>
<div style="left:20px;top:624px;width:874px;height:1px;background:#e2e2e2"></div>
<div style="left:20px;top:644px;width:874px;height:1px;background:#e2e2e2"></div>
<div style="left:20px;top:664px;width:874px;height:1px;background:#e2e2e2"></div>
<div style="left:20px;top:684px;width:874px;height:1px;background:#e2e2e2"></div>
<div style="left:20px;top:704px;width:874px;height:1px;background:#e2e2e2"></div>
<svg style="position:absolute;left:24px;top:589px" width="11" height="11" viewBox="0 0 11 11"><path d="M5.5 0.5v10M0.5 5.5h10M2 2l7 7M9 2l-7 7" stroke="#000" stroke-width="1.15"/></svg>
<div style="left:20px;top:721px;width:52px;height:21px;background:#f0f0f0;border-top:1px solid #fff;border-left:1px solid #fff;border-right:1px solid #696969;border-bottom:1px solid #696969;box-shadow:inset -1px -1px 0 #a0a0a0"></div>
<svg style="position:absolute;left:33px;top:725px" width="25" height="13" viewBox="0 0 25 13"><rect x="0" y="1" width="6" height="2" fill="#000"/><path d="M3 4L0 7h1.5v4h3V7H6z" fill="#000"/><rect x="8" y="0" width="16" height="12" fill="#000"/><rect x="9" y="1" width="14" height="1" fill="#0000ff"/><rect x="9" y="3" width="4" height="2" fill="#fff"/><rect x="14" y="3" width="4" height="2" fill="#fff"/><rect x="19" y="3" width="4" height="2" fill="#fff"/><rect x="9" y="6" width="4" height="2" fill="#fff"/><rect x="14" y="6" width="4" height="2" fill="#fff"/><rect x="19" y="6" width="4" height="2" fill="#fff"/><rect x="9" y="9" width="4" height="2" fill="#fff"/><rect x="14" y="9" width="4" height="2" fill="#fff"/><rect x="19" y="9" width="4" height="2" fill="#fff"/></svg>
<div class="t" style="left:526px;top:724px;font-size:12px;line-height:12px;color:#000;font-weight:normal;">Venta:</div>
<div style="left:560px;top:721px;width:127px;height:19px;background:#ffff00;border:1px solid #828282;"></div>
<div class="t" style="left:584px;width:100px;text-align:right;top:725px;font-size:12px;line-height:12px;color:#000;font-weight:normal;">0,00</div>
<div class="t" style="left:714px;top:724px;font-size:12px;line-height:12px;color:#000;font-weight:normal;">Compra:</div>
<div style="left:761px;top:721px;width:127px;height:19px;background:#ffff00;border:1px solid #828282;"></div>
<div class="t" style="left:785px;width:100px;text-align:right;top:725px;font-size:12px;line-height:12px;color:#000;font-weight:normal;">0,00</div>
<div style="left:1px;top:802px;width:1442px;height:19px;background:linear-gradient(#f3f4f6 0,#f3f4f6 50%,#e6e7ea 50%,#e6e7ea);border-top:1px solid #a9aeb6"></div>
<div class="t" style="left:6px;top:807px;font-size:11px;line-height:11px;color:#5a5a7a;font-weight:normal;">Record:</div>
<div style="left:80px;top:804px;width:57px;height:16px;background:#fff;border:1px solid #d5d8de"></div>
<div class="t" style="left:83px;top:807px;font-size:11px;line-height:11px;color:#000;font-weight:normal;">1 of 2561</div>
<svg style="position:absolute;left:52px;top:806px" width="10" height="10" viewBox="0 0 10 10"><path d="M1.5 1v8" stroke="#333" stroke-width="1.2"/><path d="M8 1L3 5l5 4z" fill="#333"/></svg>
<svg style="position:absolute;left:69px;top:806px" width="8" height="10" viewBox="0 0 8 10"><path d="M6 1L1 5l5 4z" fill="#b8b8b8"/></svg>
<svg style="position:absolute;left:144px;top:806px" width="8" height="10" viewBox="0 0 8 10"><path d="M1 1l5 4-5 4z" fill="#333"/></svg>
<svg style="position:absolute;left:161px;top:806px" width="10" height="10" viewBox="0 0 10 10"><path d="M1 1l5 4-5 4z" fill="#333"/><path d="M7.5 1v8" stroke="#333" stroke-width="1.2"/></svg>
<svg style="position:absolute;left:175px;top:806px" width="14" height="10" viewBox="0 0 14 10"><path d="M1 1l5 4-5 4z" fill="#333"/><path d="M8 1h5v8h-5z" fill="none" stroke="#f0c020" stroke-dasharray="1 1"/></svg>
<div style="left:193px;top:803px;width:2px;height:18px;background:#d5d8de"></div>
<svg style="position:absolute;left:203px;top:805px" width="16" height="14" viewBox="0 0 16 14"><path d="M1 1h10L7 6v6L5 10V6z" fill="none" stroke="#aaa" stroke-width="1"/><path d="M9 8l6 5M15 8l-6 5" stroke="#aaa" stroke-width="1.3"/></svg>
<div class="t" style="left:221px;top:807px;font-size:11px;line-height:11px;color:#9a9a9a;font-weight:normal;">No Filter</div>
<div style="left:273px;top:803px;width:2px;height:18px;background:#d5d8de"></div>
<div style="left:280px;top:804px;width:69px;height:16px;background:#fff;border:1px solid #d5d8de"></div>
<div class="t" style="left:283px;top:807px;font-size:11px;line-height:11px;color:#000;font-weight:normal;">Search</div>
<svg style="position:absolute;left:2px;top:7px" width="17" height="16" viewBox="0 0 17 16"><g shape-rendering="crispEdges"><rect x="0" y="0" width="17" height="16" fill="#000"/><rect x="1" y="1" width="8" height="6" fill="#f00"/><rect x="9" y="1" width="7" height="8" fill="#0ff"/><rect x="1" y="7" width="6" height="8" fill="#ff0"/><rect x="7" y="9" width="9" height="6" fill="#0f0"/><rect x="5" y="5" width="6" height="6" fill="#808080"/><rect x="6" y="6" width="4" height="4" fill="#fff"/></g></svg>
<div style="left:22px;top:9px;width:1px;height:13px;background:#8a8a8a"></div>
<div style="left:29px;top:9px;width:1px;height:13px;background:#8a8a8a"></div>
<div style="left:145px;top:9px;width:1px;height:13px;background:#8a8a8a"></div>
<svg style="position:absolute;left:33px;top:6px" width="18" height="17" viewBox="0 0 18 17"><path d="M1.5 1.5v11h10z" fill="#4a7fe0" stroke="#1f3fa0" stroke-width="1"/><circle cx="4" cy="10" r="1" fill="#fff"/><rect x="1.5" y="12.5" width="15" height="4" fill="#f5b040" stroke="#8a6010" stroke-width="1"/><path d="M5 11l9-9 2 2-9 9z" fill="#f0d070" stroke="#333" stroke-width="0.8"/><path d="M14 2l1.5-1.5 2 2-1.5 1.5z" fill="#e08070"/></svg>
<svg style="position:absolute;left:58px;top:6px" width="12" height="17" viewBox="0 0 12 17"><path d="M8 1l2 1-2 4" stroke="#d06020" stroke-width="1.6" fill="none"/><path d="M6 6l5 2-6 8-4-1z" fill="#808080"/><path d="M6 6l5 2-3 3z" fill="#555"/></svg>
<svg style="position:absolute;left:79px;top:7px" width="16" height="16" viewBox="0 0 16 16"><path d="M2.5 1.5h8l3 3v10h-11z" fill="#d8d8d8" stroke="#bbb"/><rect x="4" y="3" width="4" height="2" fill="#aaa"/><path d="M6 7h4V5l5 4-5 4v-2H6z" fill="#6a9ae8" stroke="#2a4ab8" stroke-width="0.8"/></svg>
<svg style="position:absolute;left:99px;top:7px" width="16" height="16" viewBox="0 0 16 16"><path d="M3.5 1.5h8l3 3v10h-11z" fill="#d8d8d8" stroke="#bbb"/><rect x="5" y="3" width="4" height="2" fill="#aaa"/><path d="M1 7h4V5l5 4-5 4v-2H1z" fill="#e07080" stroke="#a01020" stroke-width="0.8"/></svg>
<svg style="position:absolute;left:123px;top:7px" width="16" height="16" viewBox="0 0 16 16"><path d="M2.5 1.5h8l3 3v10h-11z" fill="#d8d8d8" stroke="#bbb"/><rect x="4" y="3" width="4" height="2" fill="#aaa"/><path d="M6 14l1-3 7-7 2 2-7 7z" fill="#3050c0" stroke="#102080" stroke-width="0.6"/><path d="M13 5l2-2 2 2-2 2z" fill="#d02030"/></svg>
<svg style="position:absolute;left:152px;top:7px" width="18" height="16" viewBox="0 0 18 16"><path d="M6.5 1.5h11v9M4.5 3.5h11v9M2.5 5.5h11v9" fill="none" stroke="#777" stroke-width="1"/><rect x="0" y="5" width="13" height="10" fill="#0033cc"/><circle cx="4" cy="8.5" r="2" fill="#fff"/><path d="M1 15c0-3 2-4 3-4s3 1 3 4z" fill="#fff"/><path d="M8 8h3M8 10h3" stroke="#fff" stroke-width="0.8"/></svg>
<svg style="position:absolute;left:174px;top:7px" width="18" height="16" viewBox="0 0 18 16"><path d="M6.5 1.5h11v9M4.5 3.5h11v9M2.5 5.5h11v9" fill="none" stroke="#777" stroke-width="1"/><rect x="0" y="5" width="13" height="10" fill="#cc0000"/><circle cx="4" cy="8.5" r="2" fill="#fff"/><path d="M1 15c0-3 2-4 3-4s3 1 3 4z" fill="#fff"/><path d="M8 8h3M8 10h3" stroke="#fff" stroke-width="0.8"/></svg>
<svg style="position:absolute;left:196px;top:7px" width="18" height="16" viewBox="0 0 18 16"><path d="M6.5 1.5h11v9M4.5 3.5h11v9M2.5 5.5h11v9" fill="none" stroke="#777" stroke-width="1"/><rect x="0" y="5" width="13" height="10" fill="#00bb22"/><circle cx="4" cy="8.5" r="2" fill="#fff"/><path d="M1 15c0-3 2-4 3-4s3 1 3 4z" fill="#fff"/><path d="M8 8h3M8 10h3" stroke="#fff" stroke-width="0.8"/></svg>
<svg style="position:absolute;left:219px;top:7px" width="17" height="16" viewBox="0 0 17 16"><path d="M1 1l2 1 5 10" stroke="#000" stroke-width="1" fill="none" stroke-dasharray="1 1"/><path d="M5 4l4-2 2 3-4 2z" fill="#5cb85c"/><path d="M6 8l6-3 3 4-6 3z" fill="#e00"/><path d="M8 12l8-3" stroke="#000" stroke-width="1"/><circle cx="9" cy="14" r="1.8" fill="#000"/></svg>
<svg style="position:absolute;left:240px;top:12px" width="9" height="8" viewBox="0 0 9 8"><path d="M0 0.5h9" stroke="#000" stroke-width="1.4"/><path d="M0.5 3h8l-4 4z" fill="#000"/></svg>
<svg style="position:absolute;left:15px;top:57px" width="36" height="34" viewBox="0 0 36 34"><path d="M2 3l5 2 11 22" fill="none" stroke="#222" stroke-width="1.6"/><path d="M17 28l16-8" stroke="#222" stroke-width="1.8"/><circle cx="20" cy="28.5" r="3" fill="#000"/><path d="M11.5 8.5l9-3.5 3 6-9 3.5z" fill="#5cb860"/><path d="M13.5 16.5l14-5.5 4 8-14 5.5z" fill="#dd0000"/></svg>
<svg style="position:absolute;left:75px;top:57px" width="14" height="18" viewBox="0 0 14 18"><path d="M8.5 1.2L11 3.5L11.6 7L10.4 12.5L8.2 16.5L4.8 15.5L1.5 13.8L2.2 10L3.5 6L6 3z" fill="#e00000"/><path d="M8.5 1.2L11 3.5M11.6 7L10.4 12.5M8.2 16.5L4.8 15.5M1.5 13.8L2.2 10" stroke="#000" stroke-width="0.9" stroke-dasharray="1 1.4" fill="none"/><path d="M8.2 6.5Q6.2 5.5 5.6 7.5Q5.6 9 7.2 9.5Q8.8 10.3 8 12Q7 13.2 5 12" fill="none" stroke="#fff" stroke-width="1.1"/><path d="M7.8 4.8L5.8 13.8" stroke="#fff" stroke-width="0.7"/></svg>
<svg style="position:absolute;left:75px;top:79px" width="14" height="17" viewBox="0 0 14 17"><rect x="1.5" y="3.5" width="11" height="12" fill="#fff" stroke="#000" stroke-width="1.4"/><rect x="4.5" y="1.5" width="5" height="3" fill="#ddd" stroke="#000" stroke-width="1"/><path d="M4 10l2 2 4-4" fill="none" stroke="#0020e0" stroke-width="1.6"/></svg>
<svg style="position:absolute;left:74px;top:101px" width="18" height="18" viewBox="0 0 18 18"><path d="M1 2l8 13M5 12l4 4 6-3" fill="none" stroke="#000" stroke-width="1" stroke-dasharray="1.2 1"/><path d="M11.7 1.5L15.6 8.2H7.8z" fill="#fff" stroke="#e00" stroke-width="1.3"/><path d="M11.7 4v2.2M11.7 7v0.8" stroke="#e00" stroke-width="1"/><path d="M7 14l2 3 2-3z" fill="#000"/></svg>
<svg style="position:absolute;left:178px;top:57px" width="32" height="33" viewBox="0 0 32 33"><defs><linearGradient id="gb" x1="0" y1="0" x2="0" y2="1"><stop offset="0" stop-color="#6aa0e0"/><stop offset="1" stop-color="#2a5590"/></linearGradient><linearGradient id="gy" x1="0" y1="0" x2="0" y2="1"><stop offset="0" stop-color="#f8dc30"/><stop offset="1" stop-color="#a08010"/></linearGradient><linearGradient id="gr" x1="0" y1="0" x2="0" y2="1"><stop offset="0" stop-color="#f06a40"/><stop offset="1" stop-color="#b02a10"/></linearGradient></defs><path d="M2 13.5l2-2.5h7l-2 2.5z" fill="#3a78d0"/><rect x="2" y="13.5" width="7" height="17" fill="url(#gb)"/><path d="M9 13.5l2-2.5v17l-2 2.5z" fill="#1a4a90"/><path d="M11 5l2.5-3h7l-2.5 3z" fill="#d8b810"/><rect x="11" y="5" width="7" height="25.5" fill="url(#gy)"/><path d="M18 5l2.5-3v25.5l-2.5 3z" fill="#8a6e08"/><path d="M20 10l2.5-3h7l-2.5 3z" fill="#e05020"/><rect x="20" y="10" width="7" height="20.5" fill="url(#gr)"/><path d="M27 10l2.5-3v20.5l-2.5 3z" fill="#a02808"/></svg>
<svg style="position:absolute;left:252px;top:57px" width="32" height="33" viewBox="0 0 32 33"><defs><linearGradient id="gbc" x1="0" y1="0" x2="0" y2="1"><stop offset="0" stop-color="#fff"/><stop offset="1" stop-color="#dde3ea"/></linearGradient></defs><rect x="1.5" y="1.5" width="29" height="29" rx="1.5" fill="url(#gbc)" stroke="#5a6e8a" stroke-width="1"/><defs><linearGradient id="gbar" gradientUnits="userSpaceOnUse" x1="0" y1="5" x2="0" y2="27"><stop offset="0" stop-color="#555"/><stop offset="0.45" stop-color="#777"/><stop offset="0.5" stop-color="#111"/><stop offset="1" stop-color="#222"/></linearGradient></defs><g fill="url(#gbar)"><rect x="5" y="5" width="1.8" height="22"/><rect x="8" y="5" width="1" height="18"/><rect x="10" y="5" width="1.8" height="18"/><rect x="13.2" y="5" width="1" height="22"/><rect x="16.6" y="5" width="1.9" height="18"/><rect x="19.6" y="5" width="0.9" height="18"/><rect x="21.8" y="5" width="1.1" height="18"/><rect x="25" y="5" width="1.9" height="22"/></g><path d="M7.5 25h4M15 25h5M21 25h3" stroke="#444" stroke-width="1.6" stroke-dasharray="1.2 0.5"/></svg>
<svg style="position:absolute;left:326px;top:58px" width="24" height="31" viewBox="0 0 24 31"><path d="M1.5 1.5h15l6 6v22h-21z" fill="#f4f7fc" stroke="#5a6e8a" stroke-width="1"/><path d="M16.5 1.5v6h6z" fill="#c8d8ee" stroke="#5a6e8a" stroke-width="1"/><path d="M6 14a6 6 0 0 1 11-2" fill="none" stroke="#2aa040" stroke-width="2.4"/><path d="M19 9v5h-5z" fill="#2aa040"/><path d="M17 18a6 6 0 0 1-11 2" fill="none" stroke="#2aa040" stroke-width="2.4"/><path d="M4 23v-5h5z" fill="#2aa040"/></svg>
<svg style="position:absolute;left:392px;top:60px" width="30" height="27" viewBox="0 0 30 27"><defs><linearGradient id="gbin" x1="0" y1="0" x2="1" y2="0"><stop offset="0" stop-color="#4a6498"/><stop offset="0.4" stop-color="#c8d6ee"/><stop offset="1" stop-color="#3a5288"/></linearGradient></defs><rect x="9" y="1" width="4" height="3" rx="1" fill="url(#gbin)"/><rect x="16" y="1" width="4" height="3" rx="1" fill="url(#gbin)"/><rect x="6" y="4" width="8" height="3" rx="1" fill="url(#gbin)"/><rect x="15" y="4" width="8" height="3" rx="1" fill="url(#gbin)"/><rect x="4" y="7" width="10" height="6" fill="url(#gbin)"/><rect x="15" y="7" width="10" height="6" fill="url(#gbin)"/><rect x="1" y="13" width="11" height="12" rx="1.5" fill="url(#gbin)"/><rect x="17" y="13" width="11" height="12" rx="1.5" fill="url(#gbin)"/><rect x="12" y="13" width="5" height="3" fill="#2a3e6a"/><path d="M1 23h11M17 23h11" stroke="#1e2e58" stroke-width="2"/></svg>
<svg style="position:absolute;left:448px;top:58px" width="24" height="31" viewBox="0 0 24 31"><defs><linearGradient id="gdoc" x1="0" y1="0" x2="1" y2="1"><stop offset="0" stop-color="#fff"/><stop offset="1" stop-color="#dfe6f2"/></linearGradient></defs><path d="M1.5 1.5h13l7 7v20h-20z" fill="url(#gdoc)" stroke="#5a6e8a" stroke-width="1"/><path d="M14.5 1.5v7h7z" fill="#cfe0f4" stroke="#5a6e8a" stroke-width="1"/></svg>
<svg style="position:absolute;left:490px;top:57px" width="18" height="18" viewBox="0 0 18 18"><rect x="5.5" y="1.5" width="7" height="5" fill="#fff" stroke="#6a7a9a"/><rect x="1.5" y="6.5" width="15" height="7" rx="1" fill="#9a9ea6" stroke="#555"/><rect x="3" y="8" width="12" height="2" fill="#c8ccd4"/><path d="M10 10h3" stroke="#2a8ae8" stroke-width="1.2"/><rect x="5.5" y="11.5" width="7" height="5" fill="#fff" stroke="#6a7a9a"/><circle cx="9" cy="14" r="0.8" fill="#2a6ae8"/></svg>
<svg style="position:absolute;left:490px;top:79px" width="18" height="18" viewBox="0 0 18 18"><path d="M7.5 8.5h6l3 3v6h-9z" fill="#f0d890" stroke="#9a7010"/><path d="M5.5 6.5h6l3 3v6h-9z" fill="#f0d890" stroke="#9a7010"/><path d="M1.5 1.5h6l2 2v7h-8z" fill="#e8eef8" stroke="#3a5aa0"/><path d="M3 4h4M3 6h5M3 8h5" stroke="#6a8ac0" stroke-width="0.8"/></svg>
<svg style="position:absolute;left:491px;top:101px" width="16" height="16" viewBox="0 0 16 16"><path d="M2 2l11 12M13 2L2 14" stroke="#111" stroke-width="1.7" stroke-linecap="round"/></svg>
<svg style="position:absolute;left:619px;top:60px" width="32" height="28" viewBox="0 0 32 28"><defs><linearGradient id="gvf" x1="0" y1="0" x2="1" y2="1"><stop offset="0" stop-color="#fff"/><stop offset="1" stop-color="#dde4f0"/></linearGradient></defs><rect x="1.5" y="1.5" width="29" height="25" fill="url(#gvf)" stroke="#6a7a9a"/><rect x="1" y="1" width="30" height="5" fill="#c8709a"/><path d="M1 6h30" stroke="#a03868"/><path d="M4 10.5h8M4 18.5h8" stroke="#6a7a9a" stroke-width="1"/><rect x="14.5" y="9.5" width="13" height="3" fill="#f4f4fa" stroke="#6a7a9a"/><rect x="14.5" y="17.5" width="13" height="3" fill="#f4f4fa" stroke="#6a7a9a"/></svg>
<svg style="position:absolute;left:661px;top:60px" width="33" height="27" viewBox="0 0 33 27"><rect x="1.5" y="1.5" width="30" height="24" fill="#f8fafc" stroke="#4a6a78"/><rect x="1" y="1" width="31" height="5" fill="#3a8890"/><rect x="1" y="1" width="4" height="25" fill="#7ab8b8"/><path d="M5 6.5h26M5 11.5h26M5 16.5h26M5 21.5h26M5 1v25M13.5 1v25M21.5 1v25" stroke="#8aa0b0" stroke-width="1"/><path d="M8 3l1.5 1.5 1.5-1.5zM16 3l1.5 1.5 1.5-1.5zM24 3l1.5 1.5 1.5-1.5z" fill="#fff"/></svg>
<svg style="position:absolute;left:712px;top:58px" width="13" height="16" viewBox="0 0 13 16"><path d="M3 1l5 10M10 1L5 11" stroke="#999" stroke-width="1.2"/><circle cx="4" cy="12.5" r="2" fill="none" stroke="#999" stroke-width="1.2"/><circle cx="9" cy="12.5" r="2" fill="none" stroke="#999" stroke-width="1.2"/></svg>
<svg style="position:absolute;left:710px;top:80px" width="17" height="16" viewBox="0 0 17 16"><path d="M1.5 1.5h6l2 2v8h-8z" fill="#f0f0f0" stroke="#aaa"/><path d="M7.5 5.5h6l2 2v7h-8z" fill="#f0f0f0" stroke="#aaa"/><path d="M9 9h5M9 11h5" stroke="#bbb"/></svg>
<svg style="position:absolute;left:710px;top:102px" width="18" height="17" viewBox="0 0 18 17"><path d="M1.5 3.5h10v11h-10z" fill="#d8d8d8" stroke="#aaa"/><rect x="4.5" y="1.5" width="4" height="3" fill="#ccc" stroke="#999"/><path d="M7.5 8.5h6l3 3v5h-9z" fill="#f4f4f4" stroke="#aaa"/></svg>
<div style="left:610px;top:60px;width:1px;height:56px;background:linear-gradient(rgba(200,204,212,0),#c5c9d1 25%,#c5c9d1 75%,rgba(200,204,212,0))"></div>
<div style="left:741px;top:60px;width:1px;height:56px;background:linear-gradient(rgba(200,204,212,0),#c5c9d1 25%,#c5c9d1 75%,rgba(200,204,212,0))"></div>
<div style="left:855px;top:60px;width:1px;height:56px;background:linear-gradient(rgba(200,204,212,0),#c5c9d1 25%,#c5c9d1 75%,rgba(200,204,212,0))"></div>
<div style="left:926px;top:60px;width:1px;height:56px;background:linear-gradient(rgba(200,204,212,0),#c5c9d1 25%,#c5c9d1 75%,rgba(200,204,212,0))"></div>
<svg style="position:absolute;left:748px;top:58px" width="17" height="15" viewBox="0 0 17 15"><defs><linearGradient id="gfb" x1="0" y1="0" x2="1" y2="0"><stop offset="0" stop-color="#fff"/><stop offset="1" stop-color="#7f9ad8"/></linearGradient></defs><path d="M3.5 1.5h3v2h1v2.5h-5V3.5h1z" fill="url(#gfb)" stroke="#1f3a8f" stroke-width="1"/><path d="M9.5 1.5h3v2h1v2.5h-5V3.5h1z" fill="url(#gfb)" stroke="#1f3a8f" stroke-width="1"/><rect x="1.5" y="6.5" width="5.5" height="7" fill="url(#gfb)" stroke="#1f3a8f" stroke-width="1"/><rect x="9.5" y="6.5" width="5.5" height="7" fill="url(#gfb)" stroke="#1f3a8f" stroke-width="1"/><rect x="7" y="6" width="2.5" height="2" fill="#1f3a8f"/></svg>
<div class="t" style="left:749px;top:78px;font-size:10px;line-height:10px;color:#333;font-weight:bold;font-family:'Liberation Serif',serif">a<span style="color:#bbb;font-weight:normal">b</span></div>
<div class="t" style="left:755px;top:86px;font-size:10px;line-height:10px;color:#333;font-weight:bold;font-family:'Liberation Sans',sans-serif">a<span style="color:#1a8a1a">c</span></div>
<svg style="position:absolute;left:749px;top:89px" width="7" height="6" viewBox="0 0 7 6"><path d="M1 0.5v1.5q0 2 2 2h2.5M4 2.5L5.5 4 4 5.5" fill="none" stroke="#2a4a98" stroke-width="1"/></svg>
<svg style="position:absolute;left:750px;top:102px" width="14" height="16" viewBox="0 0 14 16"><path d="M5.5 8.5Q6.5 2.5 10 2.8Q13.2 3.5 12.8 8Q12.4 12 9 14.5" fill="none" stroke="#2a6ad8" stroke-width="2.2"/><path d="M0.5 10L7.5 3.8L7.8 10.8z" fill="#2a6ad8"/></svg>
<svg style="position:absolute;left:774px;top:108px" width="7" height="4" viewBox="0 0 7 4"><path d="M0 0h6l-3 3z" fill="#555"/></svg>
<svg style="position:absolute;left:789px;top:102px" width="11" height="16" viewBox="0 0 11 16"><path d="M1.5 1.5v11l3-3 2.5 5 2-1-2.5-5h4z" fill="#fff" stroke="#2a3e6a" stroke-width="1"/></svg>
<svg style="position:absolute;left:816px;top:102px" width="14" height="16" viewBox="0 0 14 16"><path d="M8.5 8.5Q7.5 2.5 4 2.8Q0.8 3.5 1.2 8Q1.6 12 5 14.5" fill="none" stroke="#aaa" stroke-width="2.2"/><path d="M13.5 10L6.5 3.8L6.2 10.8z" fill="#aaa"/></svg>
<svg style="position:absolute;left:841px;top:108px" width="7" height="4" viewBox="0 0 7 4"><path d="M0 0h6l-3 3z" fill="#bbb"/></svg>
<svg style="position:absolute;left:864px;top:58px" width="13" height="16" viewBox="0 0 13 16"><path d="M1.5 1.5h7l3 3v10h-10z" fill="#f4f7fc" stroke="#2a3e6a"/><path d="M4 7a2.5 2.5 0 0 1 4.5-1M8.5 9a2.5 2.5 0 0 1-4.5 1" fill="none" stroke="#2aa040" stroke-width="1.3"/></svg>
<div class="t" style="left:893px;top:57px;font-size:7px;line-height:7px;color:#000;font-weight:bold">ABC</div>
<svg style="position:absolute;left:893px;top:63px" width="17" height="10" viewBox="0 0 17 10"><path d="M2 4l4 4 9-7" fill="none" stroke="#2a5ad8" stroke-width="2.4"/></svg>
<svg style="position:absolute;left:862px;top:79px" width="18" height="17" viewBox="0 0 18 17"><rect x="1.5" y="1.5" width="15" height="14" fill="#ddd" stroke="#aaa"/><path d="M1.5 5.5h15M1.5 9.5h15M1.5 12.5h15M6.5 1.5v14M11.5 1.5v14" stroke="#fff" stroke-width="1"/></svg>
<svg style="position:absolute;left:913px;top:88px" width="6" height="4" viewBox="0 0 6 4"><path d="M0 0h6l-3 3z" fill="#bbb"/></svg>
<div class="t" style="left:863px;top:102px;font-size:9.5px;line-height:9px;color:#3050a8;font-weight:bold;font-family:'Liberation Serif',serif">A</div>
<div class="t" style="left:863px;top:110px;font-size:9.5px;line-height:9px;color:#a02828;font-weight:bold;font-family:'Liberation Serif',serif">Z</div>
<svg style="position:absolute;left:872px;top:102px" width="7" height="16" viewBox="0 0 7 16"><path d="M3.5 0v13" stroke="#000" stroke-width="1.1"/><path d="M1 10.5l2.5 4.5 2.5-4.5z" fill="#000"/></svg>
<div class="t" style="left:892px;top:102px;font-size:9.5px;line-height:9px;color:#a02828;font-weight:bold;font-family:'Liberation Serif',serif">Z</div>
<div class="t" style="left:892px;top:110px;font-size:9.5px;line-height:9px;color:#3050a8;font-weight:bold;font-family:'Liberation Serif',serif">A</div>
<svg style="position:absolute;left:901px;top:102px" width="7" height="16" viewBox="0 0 7 16"><path d="M3.5 0v13" stroke="#000" stroke-width="1.1"/><path d="M1 10.5l2.5 4.5 2.5-4.5z" fill="#000"/></svg>
<svg style="position:absolute;left:933px;top:58px" width="17" height="17" viewBox="0 0 17 17"><path d="M1 1h10l-4 5v5l-2-1V6z" fill="#888" stroke="#444" stroke-width="0.8"/><path d="M12 4l-4 6h3l-2 6 5-7h-3l2-5z" fill="#f8d030" stroke="#a88010" stroke-width="0.7"/></svg>
<svg style="position:absolute;left:1005px;top:64px" width="6" height="4" viewBox="0 0 6 4"><path d="M0 0h6l-3 3z" fill="#555"/></svg>
<svg style="position:absolute;left:933px;top:80px" width="17" height="17" viewBox="0 0 17 17"><rect x="4.5" y="4.5" width="11" height="10" fill="#fff" stroke="#2a4ab8"/><path d="M4.5 5h11" stroke="#3a7ad8" stroke-width="2"/><path d="M7 12h1M9 12h1M11 12h1" stroke="#000"/><path d="M1 1h8l-3 4v5l-2-1V5z" fill="#777" stroke="#333" stroke-width="0.8"/></svg>
<svg style="position:absolute;left:1007px;top:86px" width="6" height="4" viewBox="0 0 6 4"><path d="M0 0h6l-3 3z" fill="#555"/></svg>
<svg style="position:absolute;left:934px;top:102px" width="16" height="14" viewBox="0 0 16 14"><path d="M1 1h13l-5 6v6l-3-2V7z" fill="#c8c8c8" stroke="#999" stroke-width="0.8"/></svg>
<div style="left:0;top:0;width:1444px;height:822px;border:1px solid #1883d7;pointer-events:none"></div>
</body></html>
